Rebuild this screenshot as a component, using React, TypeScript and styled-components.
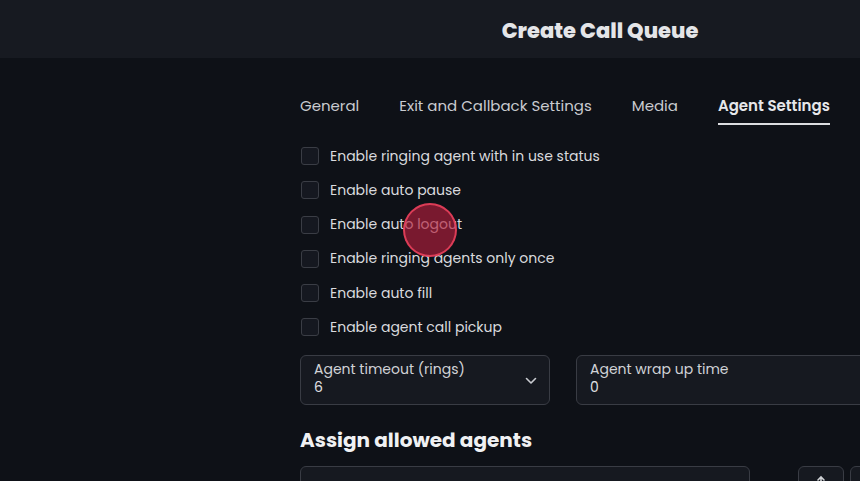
import React from 'react'
import styled, { createGlobalStyle } from 'styled-components'

const GlobalStyle = createGlobalStyle`
  html, body {
    margin: 0;
    padding: 0;
    background: #0e1117;
    overflow: hidden;
  }
  body {
    font-family: Poppins, 'Open Sans', 'DejaVu Sans', sans-serif;
    color: #d9dade;
  }
`

const Page = styled.div`
  width: 860px;
  height: 481px;
  overflow: hidden;
  position: relative;
  background: #0e1117;
`

const Header = styled.div`
  height: 58px;
  background: #171a21;
  display: flex;
  align-items: center;
  justify-content: center;
  padding-left: 340px;
`

const Title = styled.h1`
  margin: 3px 0 0;
  font-size: 21px;
  font-weight: 800;
  color: #e4e5e8;
  letter-spacing: 0;
`

const Body = styled.div`
  padding: 28px 0 0 300px;
  width: 620px;
`

const Tabs = styled.div`
  display: flex;
  gap: 40px;
  height: 40px;
`

const Tab = styled.div<{ $active?: boolean }>`
  font-size: 15px;
  font-weight: ${p => (p.$active ? 600 : 400)};
  color: ${p => (p.$active ? '#e6e7ea' : '#c9cbd0')};
  padding-top: 8px;
  height: 29px;
  border-bottom: 2px solid ${p => (p.$active ? '#dcdde0' : 'transparent')};
  white-space: nowrap;
`

const Checks = styled.div`
  display: flex;
  flex-direction: column;
  gap: 16.3px;
  margin-top: 21px;
`

const CheckRow = styled.label`
  display: flex;
  align-items: center;
  gap: 11px;
  height: 18px;
  font-size: 14px;
  color: #d9dade;
`

const Box = styled.span`
  width: 18px;
  height: 18px;
  margin-left: 1px;
  border: 1px solid #3a3d45;
  border-radius: 3px;
  background: #151820;
  box-sizing: border-box;
`

const Fields = styled.div`
  display: grid;
  grid-template-columns: 250px 1fr;
  gap: 26px;
  margin-top: 19px;
`

const Field = styled.div`
  height: 50px;
  box-sizing: border-box;
  border: 1px solid #393c44;
  border-radius: 6px;
  background: #161920;
  padding: 5px 12px 0 13px;
  display: flex;
  align-items: flex-start;
  justify-content: space-between;
`

const FieldText = styled.div`
  display: flex;
  flex-direction: column;
  line-height: 17px;
`

const FieldLabel = styled.span`
  font-size: 14px;
  color: #d0d2d6;
`

const FieldValue = styled.span`
  font-size: 14px;
  color: #e0e1e4;
  margin-top: 1px;
`

const Chevron = styled.svg`
  margin-top: 16px;
`

const Heading = styled.h2`
  margin: 21px 0 0;
  font-size: 20px;
  font-weight: 700;
  color: #f0f1f3;
  line-height: 28px;
`

const AgentRow = styled.div`
  display: flex;
  margin-top: 12px;
`

const Select = styled.div`
  width: 450px;
  height: 46px;
  box-sizing: border-box;
  border: 1px solid #393c44;
  border-radius: 6px;
  background: #161920;
  padding: 12px 14px;
  font-size: 14px;
  color: #c9cbd0;
`

const IconButton = styled.div<{ $gap: number }>`
  width: 46px;
  height: 46px;
  box-sizing: border-box;
  margin-left: ${p => p.$gap}px;
  border: 1px solid #393c44;
  border-radius: 6px;
  background: #161920;
  display: flex;
  justify-content: center;
  padding-top: 8px;
  flex-shrink: 0;
`

const Cursor = styled.div`
  position: absolute;
  left: 403px;
  top: 203px;
  width: 54px;
  height: 54px;
  border-radius: 50%;
  box-sizing: border-box;
  border: 2px solid rgba(232, 64, 92, 0.9);
  background: rgba(180, 30, 60, 0.65);
  pointer-events: none;
`

const checks = [
  'Enable ringing agent with in use status',
  'Enable auto pause',
  'Enable auto logout',
  'Enable ringing agents only once',
  'Enable auto fill',
  'Enable agent call pickup',
]

const tabs = ['General', 'Exit and Callback Settings', 'Media', 'Agent Settings']

const App: React.FC = () => (
  <Page>
    <GlobalStyle />
    <Header>
      <Title>Create Call Queue</Title>
    </Header>
    <Body>
      <Tabs>
        {tabs.map(t => (
          <Tab key={t} $active={t === 'Agent Settings'}>{t}</Tab>
        ))}
      </Tabs>
      <Checks>
        {checks.map(c => (
          <CheckRow key={c}>
            <Box />
            {c}
          </CheckRow>
        ))}
      </Checks>
      <Fields>
        <Field>
          <FieldText>
            <FieldLabel>Agent timeout (rings)</FieldLabel>
            <FieldValue>6</FieldValue>
          </FieldText>
          <Chevron width="12" height="8" viewBox="0 0 12 8" fill="none">
            <path d="M1.5 1.5 6 6l4.5-4.5" stroke="#c9cbd0" strokeWidth="1.6" strokeLinecap="round" strokeLinejoin="round" />
          </Chevron>
        </Field>
        <Field>
          <FieldText>
            <FieldLabel>Agent wrap up time</FieldLabel>
            <FieldValue>0</FieldValue>
          </FieldText>
        </Field>
      </Fields>
      <Heading>Assign allowed agents</Heading>
      <AgentRow>
        <Select>Select Agent 1</Select>
        <IconButton $gap={48}>
          <svg width="10" height="12" viewBox="0 0 10 12" fill="none">
            <path d="M5 11V2M2 5l3-3 3 3" stroke="#d0d2d6" strokeWidth="1.6" strokeLinecap="round" />
          </svg>
        </IconButton>
        <IconButton $gap={6} />
      </AgentRow>
    </Body>
    <Cursor />
  </Page>
)

export default App
